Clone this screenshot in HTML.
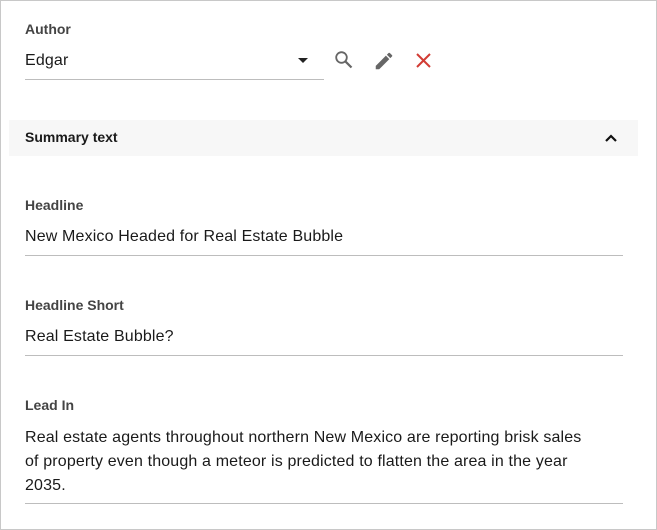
<!DOCTYPE html>
<html><head><style>
html,body{margin:0;padding:0;background:#fff;}
body{width:657px;height:530px;position:relative;overflow:hidden;font-family:"Liberation Sans",sans-serif;color:#1a1a1a;}
.frame{position:absolute;left:0;top:0;width:655px;height:528px;border:1px solid #c8c8c8;}
.abs{position:absolute;white-space:nowrap;}
.lbl{font-size:14px;font-weight:bold;color:#444;}
.val{font-size:16px;color:#1a1a1a;letter-spacing:0.15px;}
.line{position:absolute;height:1px;background:#bdbdbd;}
</style></head><body>
<div class="frame"></div>
<div class="abs lbl" style="left:25px;top:21px;">Author</div>
<div class="abs val" style="left:25px;top:52px;">Edgar</div>
<svg class="abs" style="left:297px;top:57px" width="12" height="7"><path d="M1 1h10L6 6z" fill="#222"/></svg>
<div class="line" style="left:25px;top:79px;width:299px"></div>
<svg class="abs" style="left:334px;top:50px" width="20" height="20" viewBox="0 0 20 20"><circle cx="7.5" cy="7.5" r="5.3" fill="none" stroke="#666" stroke-width="1.8"/><path d="M11.3 11.3L17.5 17.5" stroke="#666" stroke-width="2.2"/></svg>
<svg class="abs" style="left:373px;top:50px" width="22" height="22" viewBox="0 0 24 24"><path d="M3 17.25V21h3.75L17.81 9.94l-3.75-3.75L3 17.25zM20.71 7.04a1 1 0 000-1.41l-2.34-2.34a1 1 0 00-1.41 0l-1.83 1.83 3.75 3.75 1.83-1.83z" fill="#666"/></svg>
<svg class="abs" style="left:415px;top:52px" width="17" height="17" viewBox="0 0 17 17"><path d="M2 2L15 15M15 2L2 15" stroke="#d23c34" stroke-width="2"/></svg>
<div class="abs" style="left:9px;top:120px;width:629px;height:36px;background:#f7f7f7;"></div>
<div class="abs lbl" style="left:25px;top:129px;color:#1a1a1a;">Summary text</div>
<svg class="abs" style="left:604px;top:133px" width="14" height="10"><path d="M2 8L7 3L12 8" fill="none" stroke="#111" stroke-width="2.2"/></svg>
<div class="abs lbl" style="left:25px;top:197px;">Headline</div>
<div class="abs val" style="left:25px;top:228px;">New Mexico Headed for Real Estate Bubble</div>
<div class="line" style="left:25px;top:255px;width:598px"></div>
<div class="abs lbl" style="left:25px;top:297px;">Headline Short</div>
<div class="abs val" style="left:25px;top:328px;">Real Estate Bubble?</div>
<div class="line" style="left:25px;top:355px;width:598px"></div>
<div class="abs lbl" style="left:25px;top:397px;">Lead In</div>
<div class="abs val" style="left:25px;top:426px;line-height:24px;">Real estate agents throughout northern New Mexico are reporting brisk sales<br>of property even though a meteor is predicted to flatten the area in the year<br>2035.</div>
<div class="line" style="left:25px;top:503px;width:598px"></div>
</body></html>
